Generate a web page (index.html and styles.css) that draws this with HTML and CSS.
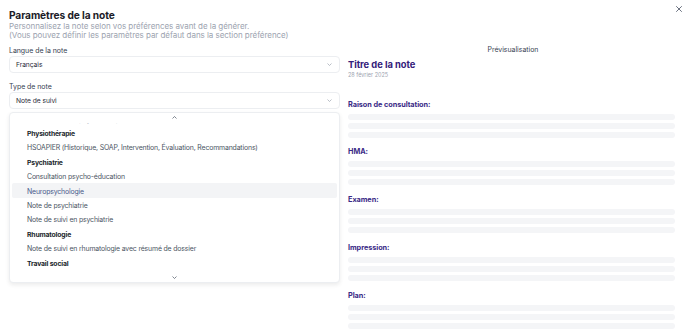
FILE: index.html
```html
<!DOCTYPE html>
<html lang="fr">
<head>
<meta charset="utf-8">
<title>Paramètres de la note</title>
<link rel="stylesheet" href="styles.css">
</head>
<body>
<div class="modal">
  <button class="close" aria-label="Fermer">
    <svg width="6" height="6" viewBox="0 0 6 6"><path d="M0.5 0.5L5.5 5.5M5.5 0.5L0.5 5.5" stroke="#6b7280" stroke-width="1" stroke-linecap="round"/></svg>
  </button>
  <header class="head">
    <h1 class="title">Paramètres de la note</h1>
    <p class="sub">Personnalisez la note selon vos préférences avant de la générer.<br>(Vous pouvez définir les paramètres par défaut dans la section préférence)</p>
  </header>
  <div class="body">
    <div class="left">
      <div class="field">
        <label class="label">Langue de la note</label>
        <div class="select"><span>Français</span><svg class="chev" width="5" height="3" viewBox="0 0 5 3"><path d="M0.5 0.5L2.5 2.5L4.5 0.5" fill="none" stroke="#9ca3af" stroke-width="0.7"/></svg></div>
      </div>
      <div class="field drop">
        <label class="label">Type de note</label>
        <div class="select"><span>Note de suivi</span><svg class="chev" width="5" height="3" viewBox="0 0 5 3"><path d="M0.5 0.5L2.5 2.5L4.5 0.5" fill="none" stroke="#9ca3af" stroke-width="0.7"/></svg></div>
        <div class="menu">
          <div class="scroll"><svg width="5" height="3" viewBox="0 0 5 3"><path d="M0.5 2.5L2.5 0.5L4.5 2.5" fill="none" stroke="#4b5563" stroke-width="0.7"/></svg></div>
          <div class="list">
            <div class="item ghost">Note de suivi en physiothérapie</div>
            <div class="group">Physiothérapie</div>
            <div class="item">HSOAPIER (Historique, SOAP, Intervention, Évaluation, Recommandations)</div>
            <div class="group">Psychiatrie</div>
            <div class="item">Consultation psycho-éducation</div>
            <div class="item active">Neuropsychologie</div>
            <div class="item">Note de psychiatrie</div>
            <div class="item">Note de suivi en psychiatrie</div>
            <div class="group">Rhumatologie</div>
            <div class="item">Note de suivi en rhumatologie avec résumé de dossier</div>
            <div class="group">Travail social</div>
          </div>
          <div class="scroll bottom"><svg width="5" height="3" viewBox="0 0 5 3"><path d="M0.5 0.5L2.5 2.5L4.5 0.5" fill="none" stroke="#4b5563" stroke-width="0.7"/></svg></div>
        </div>
      </div>
    </div>
    <div class="right">
      <div class="pv-label">Prévisualisation</div>
      <div class="note-title">Titre de la note</div>
      <div class="note-date">28 février 2025</div>
      <div class="sections">
        <section class="sec"><h2>Raison de consultation:</h2><div class="bar"></div><div class="bar"></div><div class="bar"></div></section>
        <section class="sec"><h2>HMA:</h2><div class="bar"></div><div class="bar"></div><div class="bar"></div></section>
        <section class="sec"><h2>Examen:</h2><div class="bar"></div><div class="bar"></div><div class="bar"></div></section>
        <section class="sec"><h2>Impression:</h2><div class="bar"></div><div class="bar"></div><div class="bar"></div></section>
        <section class="sec"><h2>Plan:</h2><div class="bar"></div><div class="bar"></div><div class="bar"></div></section>
      </div>
    </div>
  </div>
</div>
</body>
</html>
```

FILE: styles.css
```css
* { box-sizing: border-box; margin: 0; padding: 0; }
html, body { width: 688px; height: 330px; overflow: hidden; background: #fff; }
body { font-family: Inter, "Noto Sans", sans-serif; color: #1f2937; }
.modal { position: relative; padding: 9px 10px 0 9px; height: 330px; }
.close { position: absolute; top: 6px; right: 6px; width: 6px; height: 6px; border: 0; background: none; display: flex; }
.title { font-size: 10.2px; line-height: 12px; font-weight: 700; color: #1c1c28; letter-spacing: -0.1px; }
.sub { font-size: 8px; line-height: 8.5px; color: #9ca3af; margin-top: 1px; letter-spacing: -0.05px; }
.body { display: grid; grid-template-columns: 331px 1fr; column-gap: 8px; margin-top: 5.5px; }
.field { display: flex; flex-direction: column; }
.field + .field { margin-top: 8px; }
.label { font-size: 7px; line-height: 10px; padding-top: 1px; color: #374151; letter-spacing: -0.05px; }
.select { height: 17px; border: 1px solid #eceef1; border-radius: 4px; display: flex; align-items: center; justify-content: space-between; padding: 1px 7px 0 6px; font-size: 6.7px; color: #1f2937; letter-spacing: -0.05px; }
.drop { position: relative; }
.menu { position: absolute; top: 31px; left: 0; right: 0; height: 171px; background: #fff; border: 1px solid #eceef1; border-radius: 4px; box-shadow: 0 2px 4px rgba(0,0,0,0.08); padding: 0 2px; display: flex; flex-direction: column; }
.scroll { height: 10px; display: flex; align-items: center; justify-content: center; flex: none; }
.scroll.bottom { height: 12px; padding-top: 3px; }
.list { height: 147px; overflow: hidden; display: flex; flex-direction: column; justify-content: flex-end; }
.item, .group { height: 14.4px; flex: none; display: flex; align-items: center; padding: 1.5px 0 0 15px; font-size: 6.9px; letter-spacing: -0.15px; color: #4b5563; }
.group { font-weight: 700; font-size: 6.8px; color: #1a1f2b; }
.item.active { background: #f3f4f6; color: #4a5a8c; border-radius: 2px; }
.ghost { color: #9ca3af; }
.right { display: flex; flex-direction: column; padding-top: 1px; }
.pv-label { text-align: center; font-size: 6.9px; line-height: 8px; color: #374151; }
.note-title { font-size: 9.4px; line-height: 12px; font-weight: 700; color: #34207a; margin-top: 5px; letter-spacing: -0.05px; }
.note-date { font-size: 5.5px; line-height: 7px; color: #9ca3af; margin-top: 1.5px; }
.sections { display: flex; flex-direction: column; gap: 9.75px; margin-top: 20.5px; margin-right: 3px; }
.sec { display: flex; flex-direction: column; gap: 3px; }
.sec h2 { font-size: 7.3px; line-height: 10px; font-weight: 700; color: #3a2a86; margin-bottom: 1px; letter-spacing: -0.05px; }
.bar { height: 6px; border-radius: 3px; background: #f4f5f7; }
```
